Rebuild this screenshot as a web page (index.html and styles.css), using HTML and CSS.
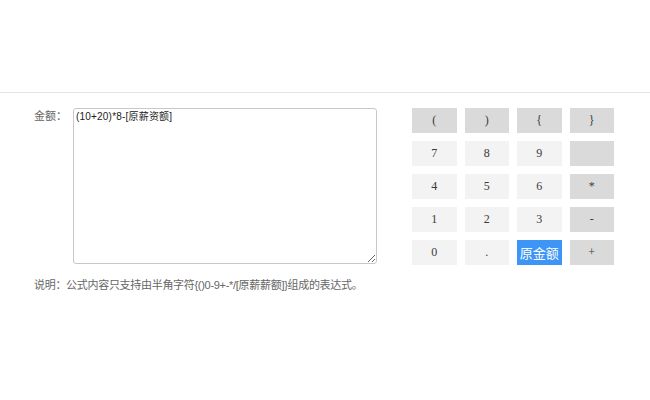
FILE: index.html
```html
<!DOCTYPE html>
<html lang="zh">
<head>
<meta charset="utf-8">
<title>公式编辑</title>
<link rel="stylesheet" href="styles.css">
</head>
<body>
<div class="header"></div>
<div class="content">
  <div class="editor">
    <div class="field">
      <label class="label" for="formula">金额：</label>
      <textarea id="formula" class="formula">(10+20)*8-[原薪资额]</textarea>
    </div>
    <p class="note">说明：公式内容只支持由半角字符{()0-9+-*/[原薪薪额]}组成的表达式。</p>
  </div>
  <div class="keypad">
    <button class="key op">(</button>
    <button class="key op">)</button>
    <button class="key op">{</button>
    <button class="key op">}</button>
    <button class="key">7</button>
    <button class="key">8</button>
    <button class="key">9</button>
    <button class="key op"></button>
    <button class="key">4</button>
    <button class="key">5</button>
    <button class="key">6</button>
    <button class="key op">*</button>
    <button class="key">1</button>
    <button class="key">2</button>
    <button class="key">3</button>
    <button class="key op">-</button>
    <button class="key">0</button>
    <button class="key">.</button>
    <button class="key primary">原金额</button>
    <button class="key op">+</button>
  </div>
</div>
</body>
</html>
```
FILE: styles.css
```css
html, body {
  margin: 0;
  padding: 0;
  background: #fff;
}
body {
  font-family: "Liberation Sans", "Noto Sans CJK SC", sans-serif;
  font-size: 11px;
  color: #666;
}
.header {
  height: 92px;
  border-bottom: 1px solid #e4e4e4;
}
.content {
  display: flex;
  padding: 15px 0 0 34px;
}
.editor {
  width: 343px;
}
.field {
  display: flex;
  align-items: flex-start;
}
.label {
  width: 39px;
  padding-top: 1px;
  line-height: 14px;
}
.formula {
  box-sizing: border-box;
  width: 304px;
  height: 156px;
  margin: 0;
  padding: 1px 2px;
  border: 1px solid #c8c8c8;
  border-radius: 3px;
  font-family: "Liberation Sans", "Noto Sans CJK SC", sans-serif;
  font-size: 10px;
  line-height: 13px;
  letter-spacing: 0.2px;
  color: #222;
  resize: both;
  outline: none;
}
.note {
  margin: 14px 0 0 0;
  line-height: 14px;
  white-space: nowrap;
  letter-spacing: -0.3px;
}
.keypad {
  margin-left: 35px;
  display: grid;
  grid-template-columns: repeat(4, 44.5px);
  grid-auto-rows: 25px;
  column-gap: 8px;
  row-gap: 8px;
}
.key {
  margin: 0;
  padding: 0;
  border: none;
  background: #f3f3f3;
  font-family: "Liberation Serif", "Noto Sans CJK SC", serif;
  font-size: 12px;
  color: #3a3a3a;
}
.key.op {
  background: #dadada;
}
.key.primary {
  background: #3d95f5;
  color: #fff;
  font-family: "Noto Sans CJK SC", sans-serif;
  font-size: 13px;
}
```
